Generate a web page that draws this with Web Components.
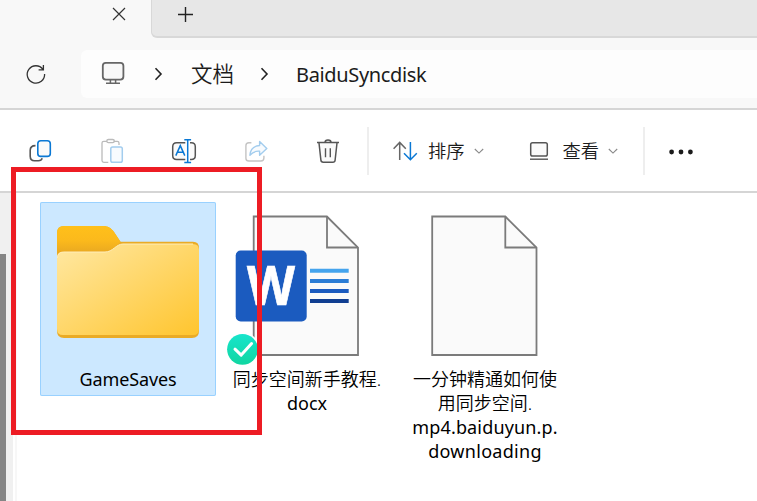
<!DOCTYPE html>
<html lang="zh-CN">
<head>
<meta charset="utf-8">
<title>BaiduSyncdisk</title>
<style>
html,body{margin:0;height:100%;overflow:hidden;background:#fff}
body{font-family:"Noto Sans","Noto Sans CJK SC",sans-serif;color:#1b1b1b}
</style>
</head>
<body>
<explorer-window></explorer-window>
<script>
const define = (name, css, html) => customElements.define(name, class extends HTMLElement {
  constructor() {
    super();
    this.attachShadow({mode: 'open'}).innerHTML = `<style>*{box-sizing:border-box}svg{display:block;fill:none;overflow:visible}${css}</style>${html}`;
  }
});

const ICONS = {
  close: ['112 7 14 14', '<path d="M113 8l12 12M125 8l-12 12" stroke="#333" stroke-width="1.2"/>'],
  plus: ['178 7 15 15', '<path d="M178 14.5h15M185.5 7v15" stroke="#222" stroke-width="1.4"/>'],
  refresh: ['26 64 20 20', '<path d="M43 69.4A8.7 8.7 0 1 0 44.6 74M43.4 65v4.9h-4.8" stroke="#333" stroke-width="1.3"/>'],
  monitor: ['101 61 24 24', '<rect x="102.8" y="62.8" width="20.6" height="16.8" rx="3" fill="#f8f8f8" stroke="#666" stroke-width="1.8"/><path d="M110.4 80v3.2M115.6 80v3.2M106 83.3h14" stroke="#666" stroke-width="1.5"/>'],
  crumb: ['154 68 9 14', '<path d="M155.5 69.3l5.5 5.7-5.5 5.7" stroke="#222" stroke-width="1.6"/>'],
  copy: ['28 139 24 24', '<path d="M35.5 145.6c-3.4 0-5.3 1.5-5.3 4.7v6c0 2.9 1.5 4.4 4.4 4.4h3.8c2 0 3.3-.8 3.8-2.4" stroke="#555" stroke-width="1.6"/><rect x="37.8" y="140.8" width="12.5" height="15.6" rx="3" fill="#fafafa" stroke="#0a78d4" stroke-width="1.6"/>'],
  paste: ['100 139 24 24', '<path d="M107 141.3h-3.2q-1.8 0-1.8 1.8v17.5q0 1.8 1.8 1.8h4.5M113.8 141.3h3.4q1.8 0 1.8 1.8v1.8" stroke="#bbb" stroke-width="1.3"/><rect x="106.8" y="139.5" width="7.5" height="3.2" rx="1.6" stroke="#bbb" stroke-width="1.3"/><rect x="110.8" y="147" width="11.5" height="15.3" rx="1.8" fill="#f8fbfe" stroke="#a3cdee" stroke-width="1.5"/>'],
  rename: ['172 139 24 24', '<path d="M185.3 142.7h-8.6q-4 0-4 4v8.7q0 4 4 4h8.6M190 142.7h1.3q4 0 4 4v8.7q0 4-4 4H190" fill="#fafafa" stroke="#555" stroke-width="1.5"/><path d="M184.3 139.7h6.8M187.7 139.7v22.8M184.3 162.4h6.8M175.8 155.6l4.5-10 4.5 10M177.4 152.3h5.8" stroke="#0a78d4" stroke-width="1.5"/>'],
  share: ['244 139 24 24', '<path d="M251.4 142.8h-2.5q-3 0-3 3v12.4q0 2.8 3 2.8h12q3 0 3-3v-2.3" stroke="#c4c4c4" stroke-width="1.4"/><path d="M259.6 141.5l7.2 6.9-7.2 6.8v-4c-4-.4-7.2 1.2-9.7 4.1.4-5.4 3.6-9.3 9.7-9.8z" fill="#f8fbfe" stroke="#a3cdee" stroke-width="1.4" stroke-linejoin="round"/>'],
  trash: ['316 139 24 24', '<path d="M317 142.6h22M325 142.5c0-3.3 6-3.3 6 0M319 143l1.9 17.2q.2 2.1 2.3 2.1h9.6q2.1 0 2.3-2.1L337 143" fill="#fafafa" stroke="#555" stroke-width="1.5"/><path d="M325.5 148.2v9M330.3 148.2v9" stroke="#555" stroke-width="1.4"/>'],
  sort: ['393 141 25 20', '<path d="M399.7 160v-17.3M393.6 148.7l6.1-6.3 6.1 6.3" stroke="#666" stroke-width="1.5"/><path d="M410.4 142v17.6M404 153.2l6.4 6.5 6.4-6.5" stroke="#0a78d4" stroke-width="1.5"/>'],
  view: ['529 141 20 20', '<rect x="530.7" y="142.7" width="16.6" height="13.3" rx="1.8" fill="#fafafa" stroke="#555" stroke-width="1.5"/><path d="M530 159.2h18" stroke="#555" stroke-width="1.4"/>'],
  down: ['474 147 10 8', '<path d="M474.8 149l4.2 4.1 4.2-4.1" stroke="#888" stroke-width="1.1"/>'],
  more: ['668 149 26 6', '<g fill="#1b1b1b"><circle cx="671.6" cy="152" r="2.4"/><circle cx="681" cy="152" r="2.4"/><circle cx="690.4" cy="152" r="2.4"/></g>'],
  folder: ['40 203 176 164', `<defs><linearGradient id="f" x1="0" y1="0" x2="1" y2="1"><stop stop-color="#ffe8a3"/><stop offset="1" stop-color="#ffc52e"/></linearGradient><linearGradient id="b" x1="0" y1="0" x2="0" y2="1"><stop stop-color="#ffc01a"/><stop offset=".55" stop-color="#fbb91c"/><stop offset="1" stop-color="#e9a821"/></linearGradient></defs>
    <path d="M57 233q0-7 7-7h39c5 0 8 2 11 6l6.5 9.7H193q6 0 6 6V331q0 7-7 7H64q-7 0-7-7z" fill="#eaab25"/><path d="M57 233q0-7 7-7h39c5 0 8 2 11 6l6.5 9.7L110 253H57z" fill="url(#b)"/>
    <path d="M57 258q0-6 6-6h42c8 0 11-8 18-8h70q6 0 6 6v79q0 6-6 6H63q-6 0-6-6z" fill="url(#f)"/><path d="M57.5 258q0-6 6-6H105c8 0 11-8 18-8h70" stroke="#ffedb9" stroke-width="1"/>`],
  word: ['219 203 176 164', `<path d="M253.7 216.5h73.2l31.1 31.2V355H253.7z" fill="#fafafa" stroke="#7b7b7b" stroke-width="1.8"/><path d="M327 216.5v31h31" stroke="#7b7b7b" stroke-width="1.8"/>
    <rect x="235.7" y="250.5" width="71" height="71" rx="5" fill="#1b5bbf"/><text x="271" y="305.3" text-anchor="middle" font-family="Open Sans" font-weight="700" font-size="54" textLength="48" lengthAdjust="spacingAndGlyphs" fill="#fff" stroke="#fff" stroke-width=".7">W</text>
    <path d="M310 270.8h38.7" stroke="#45a4ed" stroke-width="4"/><path d="M310 281h38.7" stroke="#2c7dd5" stroke-width="4"/><path d="M310 291h38.7" stroke="#1b5bbf" stroke-width="4"/><path d="M310 301h38.7" stroke="#103e91" stroke-width="4"/>
    <defs><linearGradient id="g" x1="0" y1="0" x2="0" y2="1"><stop stop-color="#18e5cc"/><stop offset="1" stop-color="#10d6a1"/></linearGradient></defs><circle cx="242.5" cy="349.3" r="17" fill="#fff"/><circle cx="242.5" cy="349.3" r="15.4" fill="url(#g)"/><path d="M235 349.2l6.2 5.9 10.4-11.6" stroke="#fff" stroke-width="3" stroke-linecap="round" stroke-linejoin="round"/>`],
  file: ['398 203 176 164', '<path d="M432.2 216.5h73.1l31.2 31.2V355H432.2z" fill="#fafafa" stroke="#7b7b7b" stroke-width="1.8"/><path d="M505.3 216.5v31h31" stroke="#7b7b7b" stroke-width="1.8"/>']
};
customElements.define('ui-icon', class extends HTMLElement {
  connectedCallback() {
    if (this.shadowRoot) return;
    const [box, art] = ICONS[this.getAttribute('name')], [, , w, h] = box.split(' ');
    this.attachShadow({mode: 'open'}).innerHTML = `<style>:host{display:block;flex:none}svg{display:block;fill:none;overflow:visible}</style><svg width="${w}" height="${h}" viewBox="${box}">${art}</svg>`;
  }
});

define('tab-strip', `:host{display:flex;height:38px;background:#f8f8f8}
  .tab{width:151px;padding:7px 0 0 112px}.rest{flex:1;background:#e7e7e7;border:solid #d8d8d8;border-width:0 0 2px 1px;border-bottom-left-radius:6px;padding:7px 0 0 26px}`,
  `<div class="tab"><ui-icon name="close"></ui-icon></div><div class="rest"><ui-icon name="plus"></ui-icon></div>`);

define('address-bar', `:host{display:flex;height:72px;background:#f8f8f8;border-bottom:2px solid #d5d5d5;padding-top:12px}
  .refresh{width:81px;padding:14px 0 0 26px}.path{flex:1;height:48px;background:#fdfdfd;border-radius:6px 0 0 6px;display:flex;align-items:center;padding-left:20px;font-size:20px;line-height:28px;white-space:nowrap}
  .path>*{flex:none}.mon{margin-top:-2px}.c1{margin-left:29px}.doc{width:45px;margin:-2px 0 0 28px;font:21.5px/28px "Noto Sans CJK SC",sans-serif;font-weight:350}.c2{margin-left:24px}.name{margin:2px 0 0 27px;letter-spacing:-.35px}`,
  `<div class="refresh"><ui-icon name="refresh"></ui-icon></div><div class="path"><ui-icon class="mon" name="monitor"></ui-icon><ui-icon class="c1" name="crumb"></ui-icon><span class="doc">文档</span><ui-icon class="c2" name="crumb"></ui-icon><span class="name">BaiduSyncdisk</span></div>`);

define('tool-button', `:host{display:flex;justify-content:center;width:72px;flex:none}`, `<slot></slot>`);
define('menu-button', `:host{display:flex;align-items:center;flex:none;font:18.3px/26px "Noto Sans CJK SC",sans-serif;font-weight:350}.text{margin-top:-2px}`, `<slot name="icon"></slot><span class="text"><slot></slot></span><ui-icon name="down" style="margin-left:9px"></ui-icon>`);
define('command-bar', `:host{display:flex;align-items:center;height:83px;background:#fff;border-bottom:2px solid #d5d5d5;padding-left:4px}
  hr{flex:none;width:2px;height:48px;border:0;background:#eee;margin:0}.d1{margin-left:3px}.sort{margin-left:24px}.sort ui-icon{margin-right:10px}.view{margin-left:45px}.view ui-icon{margin-right:14px}.d2{margin-left:25px}.more{margin:2px 0 0 23px}`,
  `<tool-button><ui-icon name="copy"></ui-icon></tool-button><tool-button><ui-icon name="paste"></ui-icon></tool-button><tool-button><ui-icon name="rename"></ui-icon></tool-button><tool-button><ui-icon name="share"></ui-icon></tool-button><tool-button><ui-icon name="trash"></ui-icon></tool-button><hr class="d1">
  <menu-button class="sort"><ui-icon slot="icon" name="sort"></ui-icon>排序</menu-button><menu-button class="view"><ui-icon slot="icon" name="view"></ui-icon>查看</menu-button><hr class="d2"><ui-icon class="more" name="more"></ui-icon>`);

define('side-rail', `:host{display:flex;width:17px;flex:none;background:linear-gradient(90deg,#f0f0f0 13px,#fff 13px 15px,#f7f7f7 15px)}
  .thumb{width:6px;margin-top:61px;background:#858585}`, `<div class="thumb"></div>`);
define('file-tile', `:host{display:block;width:176px;flex:none;height:194px;padding-top:1px;text-align:center;font-size:18px;line-height:24px;color:#000}
  :host([selected]){background:#cce8ff;box-shadow:inset 0 0 0 1px #99d1ff;border-radius:2px}
  .label{display:flex;flex-direction:column;align-items:center;white-space:nowrap}`,
  `<slot name="icon"></slot><div class="label"><slot></slot></div>`);
define('file-pane', `:host{display:flex;flex:1;gap:3px;padding:9px 0 0 23px}
  span{letter-spacing:var(--track,0)}.cjk{font-family:"Noto Sans","Noto Sans CJK SC",sans-serif;font-weight:350}.shift{margin-right:2px}`,
  `<file-tile selected><ui-icon slot="icon" name="folder"></ui-icon><span style="--track:-.1px">GameSaves</span></file-tile>
  <file-tile><ui-icon slot="icon" name="word"></ui-icon><span class="cjk">同步空间新手教程.</span><span>docx</span></file-tile>
  <file-tile><ui-icon slot="icon" name="file"></ui-icon><span class="cjk shift">一分钟精通如何使</span><span class="cjk shift">用同步空间.</span><span class="shift" style="--track:.15px">mp4.baiduyun.p.</span><span class="shift" style="--track:.3px">downloading</span></file-tile>`);
define('highlight-frame', `:host{position:absolute;left:11px;top:167px;width:251px;height:268px;border:5px solid #ed1c24;pointer-events:none}`, '');
define('explorer-window', `:host{display:flex;flex-direction:column;height:501px;width:757px;position:relative;overflow:hidden}.body{display:flex;flex:1;min-height:0}`,
  `<tab-strip></tab-strip><address-bar></address-bar><command-bar></command-bar><div class="body"><side-rail></side-rail><file-pane></file-pane></div><highlight-frame></highlight-frame>`);
</script>
</body>
</html>
